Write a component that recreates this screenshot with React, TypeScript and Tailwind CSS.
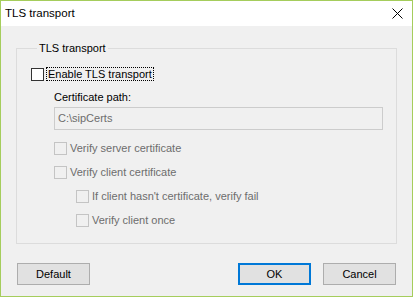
import React from "react";

function Box({ disabled }: { disabled?: boolean }) {
  return (
    <span
      className={
        disabled
          ? "inline-block w-[13px] h-[13px] shrink-0 border border-[#c4c4c4] bg-[#f0f0f0]"
          : "inline-block w-[13px] h-[13px] shrink-0 border border-[#333333] bg-white"
      }
    />
  );
}

function Check({ label, className }: { label: string; className?: string }) {
  return (
    <div className={"flex items-center h-[14px] " + (className ?? "")}>
      <Box disabled />
      <span className="ml-[3px] text-[#6d6d6d] leading-[14px] whitespace-nowrap">{label}</span>
    </div>
  );
}

function Btn({ children, primary, className }: { children: React.ReactNode; primary?: boolean; className?: string }) {
  return (
    <div
      className={
        "w-[73px] h-[22px] flex items-center justify-center bg-[#e1e1e1] " +
        (primary ? "border-2 border-[#0078d7] " : "border border-[#adadad] ") +
        (className ?? "")
      }
    >
      {children}
    </div>
  );
}

export default function App() {
  return (
    <div className="w-[413px] h-[297px] border border-[#a5cd5c] flex flex-col bg-[#f0f0f0] font-['Liberation_Sans',Arial,sans-serif] text-[11px] text-black">
      <div className="h-[25px] shrink-0 bg-white flex items-center justify-between pl-[4px] pr-[9px]">
        <span className="text-[11.5px]">TLS transport</span>
        <svg width="11" height="11" viewBox="0 0 11 11">
          <path d="M0.5 0.5 L10.5 10.5 M10.5 0.5 L0.5 10.5" stroke="#000" strokeWidth="1" />
        </svg>
      </div>
      <div className="flex-1 flex flex-col px-[15px] pt-[15px]">
        <fieldset className="h-[203px] border border-[#dcdcdc] pl-[14px]">
          <legend className="ml-[6px] px-[2px] leading-[14px] h-[14px]">TLS transport</legend>
          <div className="flex items-center h-[14px] mt-[12px]">
            <Box />
            <span className="ml-[2px] h-[14px] border border-dotted border-black pl-[1px] pr-[1px] leading-[12px] whitespace-nowrap">
              Enable TLS transport
            </span>
          </div>
          <div className="ml-[23px]">
            <div className="mt-[9px] h-[14px] leading-[14px]">Certificate path:</div>
            <div className="mt-[3px] w-[329px] h-[23px] border border-[#cccccc] bg-[#f0f0f0] flex items-center pl-[3px] text-[#6d6d6d]">
              C:\sipCerts
            </div>
            <Check label="Verify server certificate" className="mt-[11px]" />
            <Check label="Verify client certificate" className="mt-[10px]" />
            <div className="ml-[22px]">
              <Check label="If client hasn't certificate, verify fail" className="mt-[10px]" />
              <Check label="Verify client once" className="mt-[10px]" />
            </div>
          </div>
        </fieldset>
        <div className="mt-[19px] flex items-center">
          <Btn className="ml-[1px]">Default</Btn>
          <div className="flex-1" />
          <Btn primary>OK</Btn>
          <Btn className="ml-[12px] mr-[1px]">Cancel</Btn>
        </div>
      </div>
    </div>
  );
}
